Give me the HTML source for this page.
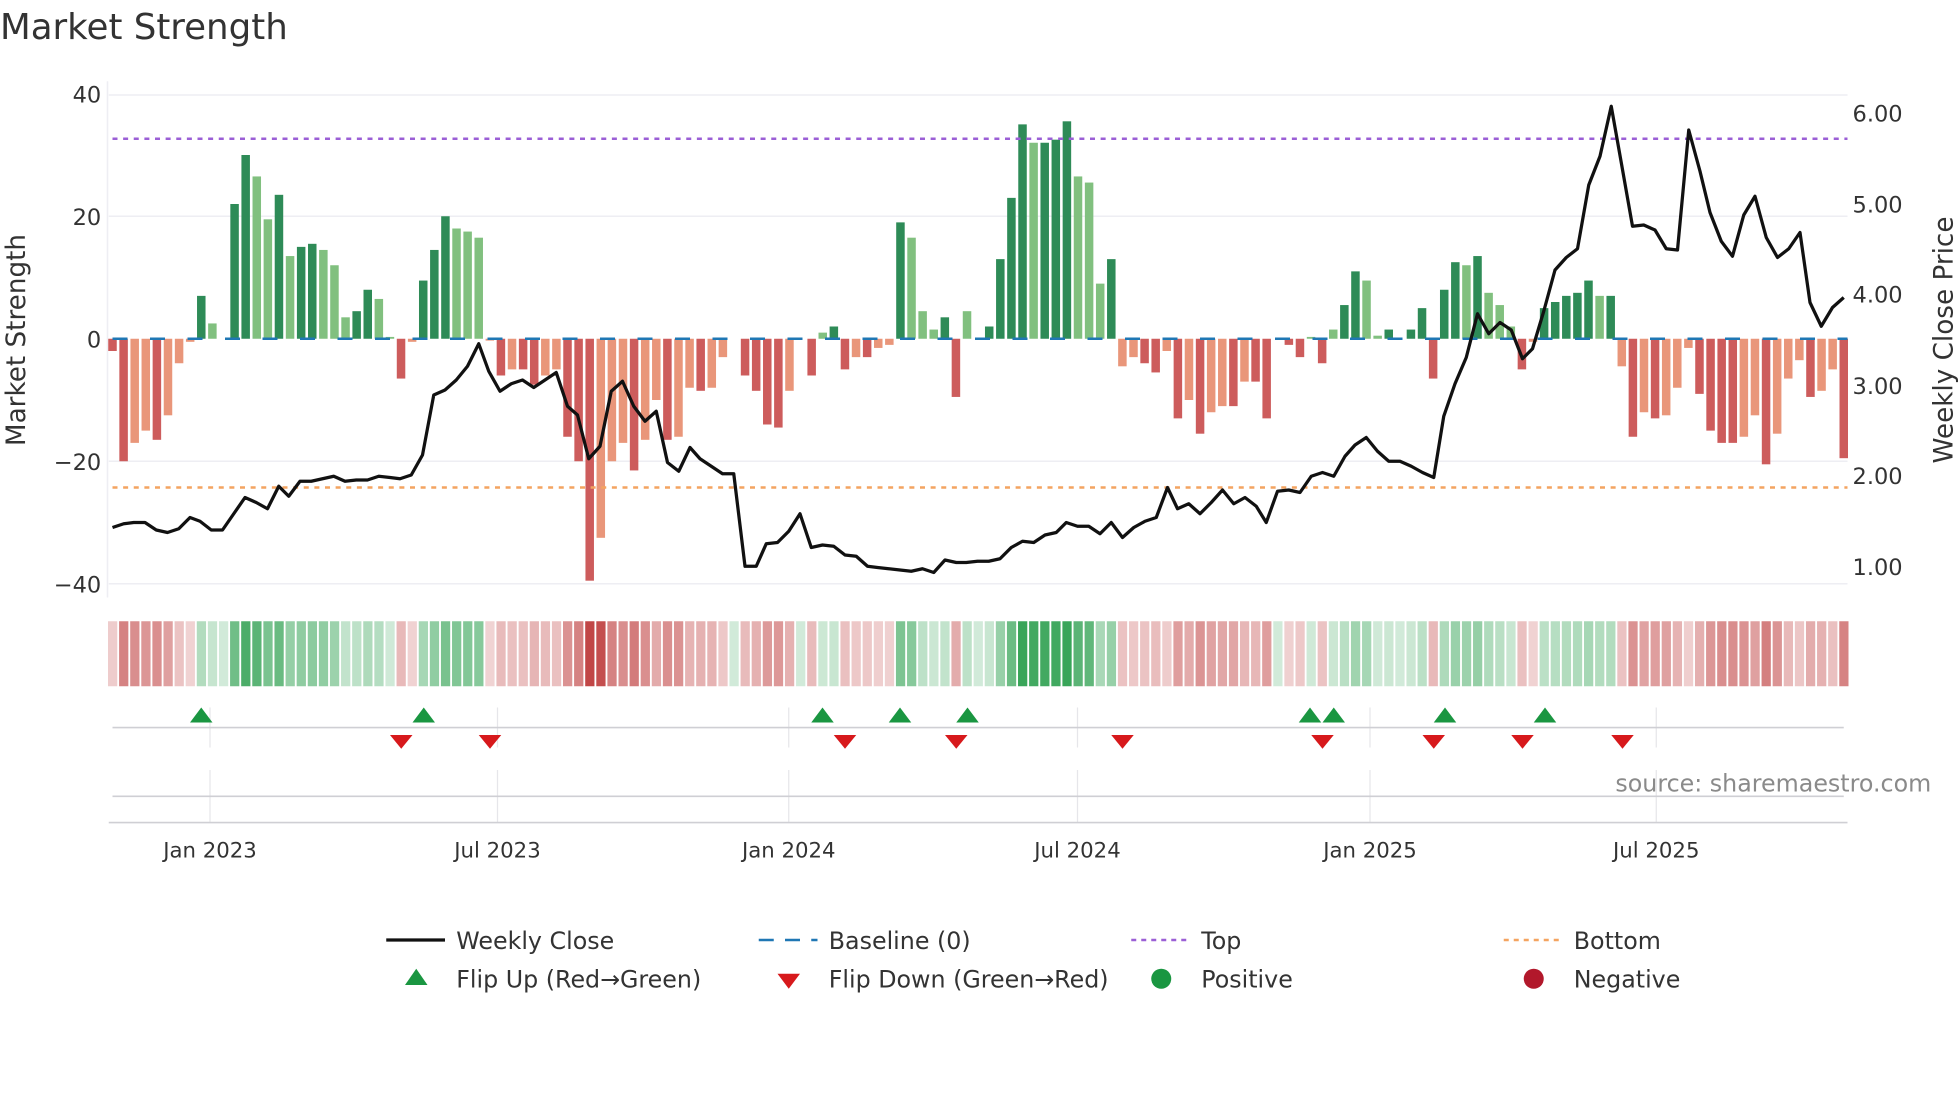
<!DOCTYPE html>
<html><head><meta charset="utf-8"><style>
html,body{margin:0;padding:0;background:#fff;width:1960px;height:1102px;overflow:hidden}
svg{display:block}
text{font-family:"DejaVu Sans","Liberation Sans",sans-serif;fill:#333}
</style></head><body>
<svg id="s" width="1960" height="1102" viewBox="0 0 1568 881.6" xmlns="http://www.w3.org/2000/svg">
<text x="0" y="31" font-size="28.5" fill="#333">Market Strength</text>
<g stroke="#eeeef3" stroke-width="1.2">
<line x1="87" y1="76" x2="1478" y2="76"/><line x1="87" y1="173" x2="1478" y2="173"/>
<line x1="87" y1="369" x2="1478" y2="369"/><line x1="87" y1="467" x2="1478" y2="467"/>
<line x1="86" y1="65" x2="86" y2="478"/>
</g>
<g font-size="18" text-anchor="end">
<text x="81" y="82">40</text><text x="81" y="180">20</text><text x="81" y="278">0</text>
<text x="81" y="376">−20</text><text x="81" y="474">−40</text>
</g>
<g font-size="18">
<text x="1482" y="97">6.00</text><text x="1482" y="170">5.00</text><text x="1482" y="242">4.00</text>
<text x="1482" y="315">3.00</text><text x="1482" y="387">2.00</text><text x="1482" y="460">1.00</text>
</g>
<text transform="translate(20,272) rotate(-90)" font-size="21" text-anchor="middle">Market Strength</text>
<text transform="translate(1562,272) rotate(-90)" font-size="21" text-anchor="middle">Weekly Close Price</text>
<g id="bars"></g>
<line x1="90" y1="271" x2="1478" y2="271" stroke="#1f77b4" stroke-width="2" stroke-dasharray="12,18"/>
<line x1="90" y1="111" x2="1478" y2="111" stroke="#9b5fd6" stroke-width="2" stroke-dasharray="4,4.5"/>
<line x1="90" y1="390" x2="1478" y2="390" stroke="#f4a460" stroke-width="2" stroke-dasharray="4,4.5"/>
<polyline id="price" fill="none" stroke="#111" stroke-width="2.6" stroke-linejoin="round"/>
<g id="heat"></g>
<g stroke="#e6e6ea" stroke-width="1">
<line x1="168" y1="566" x2="168" y2="598"/><line x1="398" y1="566" x2="398" y2="598"/>
<line x1="631" y1="566" x2="631" y2="598"/><line x1="862" y1="566" x2="862" y2="598"/>
<line x1="1096" y1="566" x2="1096" y2="598"/><line x1="1325" y1="566" x2="1325" y2="598"/>
<line x1="168" y1="616" x2="168" y2="658"/><line x1="398" y1="616" x2="398" y2="658"/>
<line x1="631" y1="616" x2="631" y2="658"/><line x1="862" y1="616" x2="862" y2="658"/>
<line x1="1096" y1="616" x2="1096" y2="658"/><line x1="1325" y1="616" x2="1325" y2="658"/>
</g>
<line x1="90" y1="582" x2="1475" y2="582" stroke="#cfcfd4" stroke-width="1.3"/>
<line x1="90" y1="637" x2="1475" y2="637" stroke="#cfcfd4" stroke-width="1.3"/>
<line x1="87" y1="658" x2="1478" y2="658" stroke="#cfcfd4" stroke-width="1.3"/>
<g id="flips"></g>
<text x="1545" y="633" font-size="19" text-anchor="end" style="fill:#8a8a8a">source: sharemaestro.com</text>
<g font-size="17" text-anchor="middle">
<text x="168" y="686">Jan 2023</text><text x="398" y="686">Jul 2023</text><text x="631" y="686">Jan 2024</text>
<text x="862" y="686">Jul 2024</text><text x="1096" y="686">Jan 2025</text><text x="1325" y="686">Jul 2025</text>
</g>
<g font-size="19">
<line x1="309" y1="752" x2="356" y2="752" stroke="#111" stroke-width="2.6"/><text x="365" y="759">Weekly Close</text>
<line x1="607" y1="752" x2="654" y2="752" stroke="#1f77b4" stroke-width="2" stroke-dasharray="12,9"/><text x="663" y="759">Baseline (0)</text>
<line x1="905" y1="752" x2="952" y2="752" stroke="#9b5fd6" stroke-width="2" stroke-dasharray="4,4"/><text x="961" y="759">Top</text>
<line x1="1203" y1="752" x2="1250" y2="752" stroke="#f4a460" stroke-width="2" stroke-dasharray="4,4"/><text x="1259" y="759">Bottom</text>
<polygon points="324,788 342,788 333,775" fill="#1a9641"/><text x="365" y="790">Flip Up (Red→Green)</text>
<polygon points="622,779 640,779 631,791" fill="#d7191c"/><text x="663" y="790">Flip Down (Green→Red)</text>
<circle cx="929" cy="783" r="8" fill="#1a9641"/><text x="961" y="790">Positive</text>
<circle cx="1227" cy="783" r="8" fill="#b2182b"/><text x="1259" y="790">Negative</text>
</g>
</svg>
<script>
var v=[-2,-20,-17,-15,-16.5,-12.5,-4,-0.5,7,2.5,0,22,30,26.5,19.5,23.5,13.5,15,15.5,14.5,12,3.5,4.5,8,6.5,0.3,-6.5,-0.5,9.5,14.5,20,18,17.5,16.5,-0.3,-6,-5,-5,-7.5,-6,-5,-16,-20,-39.5,-32.5,-20,-17,-21.5,-16.5,-10,-16.5,-16,-8,-8.5,-8,-3,0,-6,-8.5,-14,-14.5,-8.5,0,-6,1,2,-5,-3,-3,-1.5,-1,19,16.5,4.5,1.5,3.5,-9.5,4.5,0,2,13,23,35,32,32,32.5,35.5,26.5,25.5,9,13,-4.5,-3,-4,-5.5,-2,-13,-10,-15.5,-12,-11,-11,-7,-7,-13,0,-1,-3,0.3,-4,1.5,5.5,11,9.5,0.5,1.5,0,1.5,5,-6.5,8,12.5,12,13.5,7.5,5.5,2,-5,-0.5,5,6,7,7.5,9.5,7,7,-4.5,-16,-12,-13,-12.5,-8,-1.5,-9,-15,-17,-17,-16,-12.5,-20.5,-15.5,-6.5,-3.5,-9.5,-8.5,-5,-19.5];
var n=v.length,x0=90,dx=(1475-90)/(n-1),b='',h='';
for(var i=0;i<n;i++){var x=x0+dx*i,val=v[i],prev=i?v[i-1]:0;
var strong=Math.abs(val)>=Math.abs(prev);var c;
if(val>=0)c=strong?'#2e8b57':'#81c07f';else c=strong?'#cd5c5c':'#e9967a';
var hh=Math.abs(val)*4.9,y=val>=0?271-hh:271;
b+='<rect x="'+(x-3.4)+'" y="'+y+'" width="6.8" height="'+hh+'" fill="'+c+'"/>';
var a=Math.min(0.95,0.22+Math.abs(val)/40*0.85);
var hc=val>=0?'rgba(46,160,80,'+a+')':'rgba(190,60,60,'+a+')';
h+='<rect x="'+(x-3.6)+'" y="497" width="7.4" height="52" fill="'+hc+'"/>';}
document.getElementById('bars').innerHTML=b;document.getElementById('heat').innerHTML=h;
var p="90,422 99,419 107,418 116,418 125,424 134,426 143,423 152,414 160,417 169,424 178,424 187,411 196,398 205,402 214,407 223,389 231,397 240,385 249,385 258,383 267,381 276,385 285,384 294,384 303,381 312,382 320,383 329,380 338,364 347,316 356,312 365,304 374,293 383,275 391,297 400,313 409,307 418,304 427,310 436,304 445,298 454,325 462,332 471,367 480,357 489,313 498,305 507,325 516,337 525,329 534,370 543,377 552,358 560,367 569,373 578,379 587,379 596,453 605,453 613,435 622,434 631,425 640,411 649,438 658,436 667,437 676,444 685,445 694,453 702,454 711,455 720,456 729,457 738,455 747,458 756,448 765,450 773,450 782,449 791,449 800,447 809,438 818,433 827,434 836,428 845,426 853,418 862,421 871,421 880,427 889,418 898,430 907,422 916,417 925,414 934,390 942,407 951,403 960,411 969,402 978,392 987,403 996,398 1005,405 1013,418 1022,393 1031,392 1040,394 1049,381 1058,378 1067,381 1076,365 1084,356 1093,350 1102,361 1111,369 1120,369 1129,373 1138,378 1147,382 1155,333 1164,307 1173,286 1182,251 1191,267 1200,258 1209,264 1218,287 1226,279 1235,249 1244,216 1253,206 1262,199 1271,148 1280,125 1289,85 1297,130 1306,181 1315,180 1324,184 1333,199 1342,200 1351,104 1360,137 1368,170 1377,193 1386,205 1395,172 1404,157 1413,190 1422,206 1431,199 1440,186 1448,242 1457,261 1466,246 1475,238";
document.getElementById('price').setAttribute('points',p);
var up=[161,339,658,720,774,1048,1067,1156,1236],dn=[321,392,676,765,898,1058,1147,1218,1298],f='';
up.forEach(function(x){f+='<polygon points="'+(x-9)+',578 '+(x+9)+',578 '+x+',566" fill="#1a9641"/>';});
dn.forEach(function(x){f+='<polygon points="'+(x-9)+',588 '+(x+9)+',588 '+x+',599" fill="#d7191c"/>';});
document.getElementById('flips').innerHTML=f;
</script>
</body></html>
